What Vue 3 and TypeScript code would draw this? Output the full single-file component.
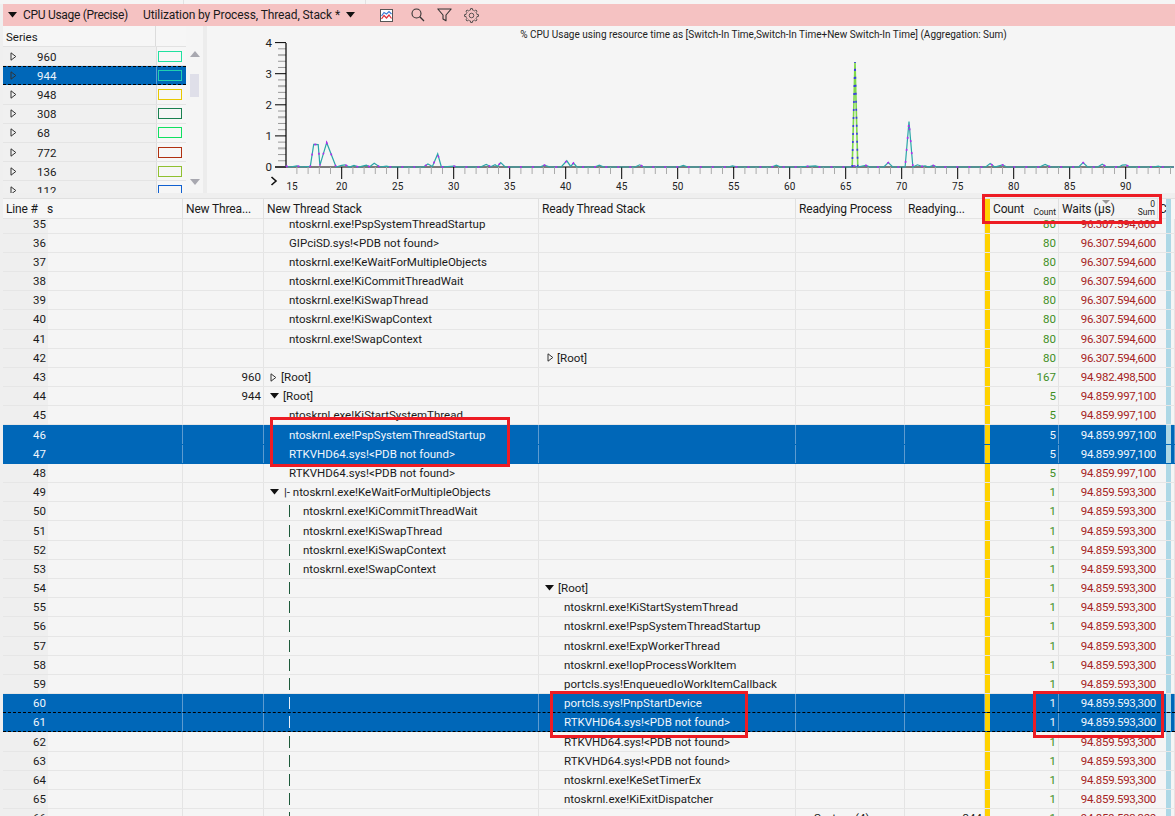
<script setup lang="ts">
type Row = {
  n: number
  id?: string
  kind?: 'plain' | 'root' | 'rootOpen' | 'branch' | 'bar'
  stack?: string
  ready?: string
  readyKind?: 'closed' | 'open' | 'plain'
  proc?: string
  readying?: string
  count: string
  waits: string
  sel?: boolean
  dash?: boolean
}

const W1 = '96.307.594,600'
const W2 = '94.859.997,100'
const W3 = '94.859.593,300'
const K = 'ntoskrnl.exe!'
const RTK = 'RTKVHD64.sys!<PDB not found>'

const rows: Row[] = [
  { n: 35, kind: 'plain', stack: K + 'PspSystemThreadStartup', count: '80', waits: W1 },
  { n: 36, kind: 'plain', stack: 'GIPciSD.sys!<PDB not found>', count: '80', waits: W1 },
  { n: 37, kind: 'plain', stack: K + 'KeWaitForMultipleObjects', count: '80', waits: W1 },
  { n: 38, kind: 'plain', stack: K + 'KiCommitThreadWait', count: '80', waits: W1 },
  { n: 39, kind: 'plain', stack: K + 'KiSwapThread', count: '80', waits: W1 },
  { n: 40, kind: 'plain', stack: K + 'KiSwapContext', count: '80', waits: W1 },
  { n: 41, kind: 'plain', stack: K + 'SwapContext', count: '80', waits: W1 },
  { n: 42, ready: '[Root]', readyKind: 'closed', count: '80', waits: W1 },
  { n: 43, id: '960', kind: 'root', stack: '[Root]', count: '167', waits: '94.982.498,500' },
  { n: 44, id: '944', kind: 'rootOpen', stack: '[Root]', count: '5', waits: W2 },
  { n: 45, kind: 'plain', stack: K + 'KiStartSystemThread', count: '5', waits: W2 },
  { n: 46, kind: 'plain', stack: K + 'PspSystemThreadStartup', count: '5', waits: W2, sel: true },
  { n: 47, kind: 'plain', stack: RTK, count: '5', waits: W2, sel: true },
  { n: 48, kind: 'plain', stack: RTK, count: '5', waits: W2 },
  { n: 49, kind: 'branch', stack: '|- ' + K + 'KeWaitForMultipleObjects', count: '1', waits: W3 },
  { n: 50, kind: 'bar', stack: K + 'KiCommitThreadWait', count: '1', waits: W3 },
  { n: 51, kind: 'bar', stack: K + 'KiSwapThread', count: '1', waits: W3 },
  { n: 52, kind: 'bar', stack: K + 'KiSwapContext', count: '1', waits: W3 },
  { n: 53, kind: 'bar', stack: K + 'SwapContext', count: '1', waits: W3 },
  { n: 54, kind: 'bar', ready: '[Root]', readyKind: 'open', count: '1', waits: W3 },
  { n: 55, kind: 'bar', ready: K + 'KiStartSystemThread', readyKind: 'plain', count: '1', waits: W3 },
  { n: 56, kind: 'bar', ready: K + 'PspSystemThreadStartup', readyKind: 'plain', count: '1', waits: W3 },
  { n: 57, kind: 'bar', ready: K + 'ExpWorkerThread', readyKind: 'plain', count: '1', waits: W3 },
  { n: 58, kind: 'bar', ready: K + 'IopProcessWorkItem', readyKind: 'plain', count: '1', waits: W3 },
  { n: 59, kind: 'bar', ready: 'portcls.sys!EnqueuedIoWorkItemCallback', readyKind: 'plain', count: '1', waits: W3 },
  { n: 60, kind: 'bar', ready: 'portcls.sys!PnpStartDevice', readyKind: 'plain', count: '1', waits: W3, sel: true, dash: true },
  { n: 61, kind: 'bar', ready: RTK, readyKind: 'plain', count: '1', waits: W3, sel: true, dash: true },
  { n: 62, kind: 'bar', ready: RTK, readyKind: 'plain', count: '1', waits: W3 },
  { n: 63, kind: 'bar', ready: RTK, readyKind: 'plain', count: '1', waits: W3 },
  { n: 64, kind: 'bar', ready: K + 'KeSetTimerEx', readyKind: 'plain', count: '1', waits: W3 },
  { n: 65, kind: 'bar', ready: K + 'KiExitDispatcher', readyKind: 'plain', count: '1', waits: W3 },
  { n: 66, kind: 'bar', proc: 'System (4)', readying: '344', count: '1', waits: W3 },
]

const series = [
  { id: '960', color: '#20e0a0' },
  { id: '944', color: '#20d0b0', sel: true },
  { id: '948', color: '#e8c800' },
  { id: '308', color: '#1a8050' },
  { id: '68', color: '#10e060' },
  { id: '772', color: '#b03010' },
  { id: '136', color: '#90c030' },
  { id: '112', color: '#1060d0' },
]

const X = (t: number) => 286.7 + (t - 15) * 11.2
const Y = (v: number) => 167 - 31.1 * v

const pts: [number, number][] = [
  [15, 0.03], [15.4, 0], [16, 0.04], [16.4, 0], [17.2, 0.02], [17.5, 0.73], [17.9, 0.72], [18.05, 0.05],
  [18.66, 0.78], [19.5, 0], [20, 0.05], [20.3, 0.07], [20.7, 0], [21.1, 0.05], [21.5, 0], [22.2, 0.06], [22.5, 0.01],
  [22.9, 0.12], [23.4, 0], [24, 0.03], [24.4, 0], [27.3, 0], [27.7, 0.1], [28.1, 0.02], [28.57, 0.42], [28.9, 0],
  [30, 0.03], [30.4, 0], [32.4, 0], [32.9, 0.08], [33.3, 0.01], [33.7, 0.07], [33.9, 0.02], [34.2, 0.14], [34.6, 0],
  [37.7, 0], [38.1, 0.06], [38.6, 0], [39.6, 0], [40.1, 0.2], [40.45, 0.02], [40.7, 0.13], [41, 0], [42.6, 0],
  [43, 0.06], [43.4, 0], [46.2, 0], [46.6, 0.07], [47, 0], [50.1, 0], [50.5, 0.05], [50.9, 0], [54.5, 0], [54.9, 0.04],
  [55.3, 0], [58.4, 0], [58.8, 0.06], [59.2, 0], [60.7, 0], [62.3, 0.04], [62.7, 0], [65.5, 0], [65.6, 0.05], [66.05, 0], [66.8, 0.05],
  [67.2, 0], [68.4, 0], [68.8, 0.14], [69.2, 0], [70.3, 0], [70.65, 1.46], [71, 0], [71.4, 0.07], [71.8, 0.02], [72.1, 0.04],
  [72.4, 0], [72.8, 0.05], [73.2, 0], [77.5, 0], [77.9, 0.11], [78.3, 0], [78.7, 0.04], [79, 0.07], [79.4, 0], [82.3, 0],
  [82.8, 0.08], [83.3, 0], [85.8, 0], [86.2, 0.14], [86.6, 0], [87.5, 0], [87.9, 0.09], [88.3, 0], [89.4, 0], [89.7, 0.06],
  [90, 0.07], [90.4, 0], [92.5, 0], [92.9, 0.03], [93.2, 0], [94.4, 0],
]
const linePts = pts.map(([t, v]) => `${X(t).toFixed(1)},${Y(v).toFixed(1)}`).join(' ')
const spikePts = [[65.58, 0], [65.83, 3.38], [66.08, 0]]
  .map(([t, v]) => `${X(t).toFixed(1)},${Y(v).toFixed(1)}`)
  .join(' ')

const majorX: number[] = []
for (let t = 20; t <= 90; t += 5) majorX.push(t)
const minorX: number[] = []
for (let t = 15; t <= 94; t++) if (t % 5 !== 0) minorX.push(t)
const minorY: number[] = []
for (let i = 1; i < 20; i++) if (i % 5 !== 0) minorY.push(i / 5)
const thickY = [0.6, 1.6, 2.6, 3.6]

const gearPath = (() => {
  const teeth = 8
  const cx = 8.5
  const cy = 8.5
  let d = ''
  for (let i = 0; i < teeth; i++) {
    const a = (i / teeth) * Math.PI * 2
    const s = (Math.PI * 2) / teeth
    const p = [
      [a - s * 0.5, 6.3],
      [a - s * 0.24, 6.3],
      [a - s * 0.15, 8],
      [a + s * 0.15, 8],
      [a + s * 0.24, 6.3],
    ]
    for (const [ang, r] of p) {
      const x = cx + r * Math.cos(ang)
      const y = cy + r * Math.sin(ang)
      d += `${d ? 'L' : 'M'}${x.toFixed(2)} ${y.toFixed(2)}`
    }
  }
  return d + 'Z'
})()
</script>

<template>
  <div class="page">
    <div class="strip">
      <i class="strip-a"></i>
      <i class="strip-b"></i>
      <i class="strip-c"></i>
    </div>

    <header class="title">
      <svg class="tri" width="9" height="6" viewBox="0 0 9 6"><path d="M0 0H9L4.5 5.5Z" fill="#111" /></svg>
      <span class="t-name">CPU Usage (Precise)</span>
      <span class="t-view">Utilization by Process, Thread, Stack *</span>
      <svg class="tri t-drop" width="9" height="6" viewBox="0 0 9 6"><path d="M0 0H9L4.5 5.5Z" fill="#111" /></svg>
      <svg class="ic ic-chart" width="13" height="13" viewBox="0 0 13 13">
        <rect x="0.5" y="0.5" width="12" height="12" fill="#fff" stroke="#555" />
        <path d="M1.5 7 4 3.5 6.5 5 9 2.5 11.5 5" fill="none" stroke="#3a7bd5" stroke-width="1.2" />
        <path d="M1.5 10 4 6.5 6.5 9 9 6 11.5 9.5" fill="none" stroke="#e0303a" stroke-width="1.2" />
      </svg>
      <svg class="ic ic-search" width="14" height="14" viewBox="0 0 14 14">
        <circle cx="5.5" cy="5.5" r="4.5" fill="none" stroke="#333" stroke-width="1.1" />
        <path d="M8.8 8.8 13 13" stroke="#333" stroke-width="1.3" />
      </svg>
      <svg class="ic ic-filter" width="15" height="14" viewBox="0 0 15 14">
        <path d="M0.8 1H14.2L9 7V12.8L6 11V7Z" fill="none" stroke="#333" stroke-width="1.1" stroke-linejoin="round" />
      </svg>
      <svg class="ic ic-gear" width="15" height="15" viewBox="0 0 17 17">
        <path :d="gearPath" fill="none" stroke="#444" stroke-width="1" stroke-linejoin="round" />
        <circle cx="8.5" cy="8.5" r="2.6" fill="none" stroke="#444" stroke-width="1" />
      </svg>
    </header>

    <section class="top">
      <div class="series">
        <div class="s-head">
          <div class="s-h1">Series</div>
          <div class="s-h2"></div>
        </div>
        <div class="s-list">
          <div v-for="s in series" :key="s.id" class="s-row" :class="{ on: s.sel }">
            <svg class="tg s-tg" width="7" height="9" viewBox="0 0 7 9"><path d="M1 .8V8.2L5.8 4.5Z" fill="none" stroke="#333" /></svg>
            <span class="s-id">{{ s.id }}</span>
            <span class="s-col"><i class="swatch" :style="{ borderColor: s.color }"></i></span>
          </div>
        </div>
      </div>
      <div class="scroll">
        <svg width="10" height="6" viewBox="0 0 10 6"><path d="M0 6 5 0l5 6Z" fill="#a8a8b0" /></svg>
        <div class="thumb"></div>
        <svg class="down" width="10" height="6" viewBox="0 0 10 6"><path d="M0 0 5 6l5-6Z" fill="#a8a8b0" /></svg>
      </div>
      <div class="sep"></div>
      <svg class="chart" width="967" height="167" viewBox="208 26 967 167">
        <text x="764.5" y="38" text-anchor="middle" class="c-title">% CPU Usage using resource time as [Switch-In Time,Switch-In Time+New Switch-In Time] (Aggregation: Sum)</text>
        <line v-for="v in minorY" :key="'my' + v" x1="279" x2="287" :y1="Y(v)" :y2="Y(v)" stroke="#999" stroke-width="1" />
        <line v-for="v in thickY" :key="'thk' + v" x1="279" x2="287" :y1="Y(v)" :y2="Y(v)" stroke="#b5b5b5" stroke-width="2" />
        <line v-for="v in [0, 1, 2, 3, 4]" :key="'ty' + v" x1="276" x2="287" :y1="Y(v)" :y2="Y(v)" stroke="#000" stroke-width="1" />
        <line x1="287" x2="287" y1="43" y2="167" stroke="#000" stroke-width="1.2" />
        <line x1="276" x2="1175" y1="167" y2="167" stroke="#000" stroke-width="1" />
        <line v-for="t in minorX" :key="'mx' + t" :x1="X(t)" :x2="X(t)" y1="167" y2="174" stroke="#aaa" stroke-width="1" />
        <line v-for="t in majorX" :key="'tx' + t" :x1="X(t)" :x2="X(t)" y1="167" y2="179" stroke="#000" stroke-width="1" />
        <text v-for="v in [0, 1, 2, 3, 4]" :key="'ly' + v" x="273" :y="Y(v) + 4" text-anchor="end" class="c-lbl big">{{ v }}</text>
        <text x="293" y="190" text-anchor="middle" class="c-lbl">15</text>
        <text v-for="t in majorX" :key="'lx' + t" :x="X(t)" y="190" text-anchor="middle" class="c-lbl">{{ t }}</text>
        <path d="M272.5 177 277 181 272.5 185" fill="none" stroke="#111" stroke-width="1.6" />
        <polyline :points="linePts" fill="none" stroke="#2aa6a8" stroke-width="1.2" />
        <polyline :points="linePts" fill="none" stroke="#b428f0" stroke-width="1.6" stroke-dasharray="2 10" />
        <polyline :points="spikePts" fill="none" stroke="#7fd84a" stroke-width="1.6" />
        <polyline :points="spikePts" fill="none" stroke="#3a3ae6" stroke-width="1.6" stroke-dasharray="2 6" />
      </svg>
    </section>

    <section class="table">
      <div class="thead cols">
        <div class="th first">Line #</div>
        <div class="th s-clip">s</div>
        <div class="th">New Threa...</div>
        <div class="th">New Thread Stack</div>
        <div class="th">Ready Thread Stack</div>
        <div class="th">Readying Process</div>
        <div class="th">Readying...</div>
        <div class="yellow"></div>
        <div class="th th-m">Count<small class="sub">Count</small></div>
        <div class="th th-m">
          Waits (µs)
          <i class="sort"></i>
          <small class="zero">0</small>
          <small class="sub">Sum</small>
        </div>
        <div class="th clip">C</div>
        <div class="lblue"></div>
        <div class="th end"></div>
      </div>
      <div class="tbody">
        <div v-for="r in rows" :key="r.n" class="tr cols" :class="{ on: r.sel, dash: r.dash }">
          <div class="td num">{{ r.n }}</div>
          <div class="td"></div>
          <div class="td tid">{{ r.id }}</div>
          <div class="td stack">
            <template v-if="r.kind === 'plain'"><span class="pad">{{ r.stack }}</span></template>
            <template v-else-if="r.kind === 'root'">
              <svg class="tg rt" width="7" height="9" viewBox="0 0 7 9"><path d="M1 .8V8.2L5.8 4.5Z" fill="none" stroke="#333" /></svg>
              <span>{{ r.stack }}</span>
            </template>
            <template v-else-if="r.kind === 'rootOpen'">
              <svg class="tg rt" width="9" height="6" viewBox="0 0 9 6"><path d="M0 0H9L4.5 5.5Z" fill="#111" /></svg>
              <span class="rt-t">{{ r.stack }}</span>
            </template>
            <template v-else-if="r.kind === 'branch'">
              <svg class="tg rt" width="9" height="6" viewBox="0 0 9 6"><path d="M0 0H9L4.5 5.5Z" fill="#111" /></svg>
              <span class="br-t">{{ r.stack }}</span>
            </template>
            <template v-else-if="r.kind === 'bar'">
              <i class="vbar"></i>
              <span class="bar-t">{{ r.stack }}</span>
            </template>
          </div>
          <div class="td ready">
            <template v-if="r.readyKind === 'closed'">
              <svg class="tg rd" width="7" height="9" viewBox="0 0 7 9"><path d="M1 .8V8.2L5.8 4.5Z" fill="none" stroke="#333" /></svg>
              <span>{{ r.ready }}</span>
            </template>
            <template v-else-if="r.readyKind === 'open'">
              <svg class="tg rd2" width="9" height="6" viewBox="0 0 9 6"><path d="M0 0H9L4.5 5.5Z" fill="#111" /></svg>
              <span>{{ r.ready }}</span>
            </template>
            <span v-else-if="r.readyKind === 'plain'" class="pad">{{ r.ready }}</span>
          </div>
          <div class="td proc">{{ r.proc }}</div>
          <div class="td tid">{{ r.readying }}</div>
          <div class="yellow"></div>
          <div class="td count">{{ r.count }}</div>
          <div class="td waits">{{ r.waits }}</div>
          <div class="td gapc"></div>
          <div class="lblue"></div>
          <div class="td"></div>
        </div>
      </div>
    </section>

    <i class="mark m1"></i>
    <i class="mark m2"></i>
    <i class="mark m3"></i>
    <i class="mark m4"></i>
  </div>
</template>

<style>
html, body { margin: 0; background: #f5f5f5; }
</style>

<style scoped>
.page {
  position: relative;
  width: 1175px;
  height: 816px;
  overflow: hidden;
  background: #efefef;
  font-family: Roboto, "Noto Sans", sans-serif;
  font-size: 11.5px;
  color: #1a1a1a;
  display: flex;
  flex-direction: column;
}
svg { display: block; flex: none; }

.strip { height: 4px; display: flex; gap: 1px; background: #e2e2e2; flex: none; }
.strip i { display: block; height: 4px; background: #f5f5f5; }
.strip-a { width: 183px; }
.strip-b { width: 181px; }
.strip-c { flex: 1; }

.title {
  height: 22px;
  margin-left: 3px;
  background: #f5c2c2;
  display: flex;
  align-items: center;
  flex: none;
  font-size: 12px;
}
.tri { margin-left: 5px; }
.t-name { margin-left: 6px; width: 120px; white-space: nowrap; letter-spacing: -0.3px; }
.t-view { white-space: nowrap; width: 200px; letter-spacing: -0.1px; }
.t-drop { margin-left: 3px; }
.ic-chart { margin-left: 25px; }
.ic-search { margin-left: 18px; }
.ic-filter { margin-left: 12px; }
.ic-gear { margin-left: 12px; }

.top { height: 167px; margin-left: 3px; display: flex; flex: none; background: #f5f5f5; }
.series { width: 183px; flex: none; display: flex; flex-direction: column; }
.s-head { height: 21px; display: flex; flex: none; border-bottom: 1px solid #e2e2e2; box-sizing: border-box; background: #f6f6f6; }
.s-h1 { width: 153px; padding: 4px 0 0 3px; box-sizing: border-box; border-right: 1px solid #dcdcdc; }
.s-h2 { width: 30px; }
.s-list { height: 146px; overflow: hidden; }
.s-row {
  height: 19.2px;
  box-sizing: border-box;
  display: flex;
  align-items: center;
  background: #f0f0f0;
  border-bottom: 1px solid #e4e4e4;
  position: relative;
}
.s-tg { margin-left: 7px; }
.s-id { margin-left: 20px; width: 119px; padding-top: 1px; }
.s-col {
  align-self: stretch;
  width: 30px;
  background: #f6f6f6;
  border-left: 1px solid #dedede;
  box-sizing: border-box;
  display: flex;
  align-items: center;
  padding-left: 1px;
}
.swatch { display: block; width: 24px; height: 11px; box-sizing: border-box; border: 1px solid; }
.s-row.on { background: #0067b8; color: #eaf2fa; border-bottom: 1px dashed #000; border-top: 1px dashed #000; }
.s-row.on .s-col { background: #0067b8; border-left-color: #5d9bd0; }

.scroll { width: 17px; flex: none; display: flex; flex-direction: column; align-items: center; padding-top: 25px; box-sizing: border-box; background: #f5f5f5; }
.thumb { width: 9px; height: 23px; margin-top: 17px; background: #dfdfe9; }
.down { margin-top: 82px; }
.sep { width: 4px; flex: none; background: #ececec; }
.chart { flex: none; background: #f5f5f5; }
.c-title { font-size: 10px; fill: #222; }
.c-lbl { font-size: 10px; fill: #222; }
.c-lbl.big { font-size: 11.5px; }

.table { margin-top: 5px; flex: 1; min-height: 0; background: #f5f5f5; margin-left: 3px; display: flex; flex-direction: column; }
.cols { display: grid; grid-template-columns: 45px 135px 81px 275px 257px 109px 80px 5px 69px 99px 8px 5px 4px; }
.thead {
  height: 21px;
  flex: none;
  position: relative;
  z-index: 2;
  background: #f5f5f5;
  border-top: 1px solid #e0e0e0;
  box-sizing: border-box;
  font-size: 12px;
}
.th {
  position: relative;
  box-sizing: border-box;
  border-right: 1px solid #e0e0e0;
  border-bottom: 1px solid #e4e4e4;
  padding: 3px 0 0 3px;
  white-space: nowrap;
  overflow: hidden;
  background: #f6f6f6;
  letter-spacing: -0.15px;
}
.th.first { border-right: none; padding-left: 3px; }
.th.s-clip { padding-left: 0; margin-left: -1px; }
.th.clip { border-right: none; padding-left: 1px; }
.th.end { border: none; }
.th-m { padding-left: 3px; background: #f4f4f4; }
.sub { position: absolute; right: 2px; bottom: 0; font-size: 8.5px; line-height: 11px; letter-spacing: 0; }
.zero { position: absolute; right: 2px; top: 0; font-size: 8.5px; line-height: 11px; letter-spacing: 0; }
.sort {
  position: absolute;
  left: 43px;
  top: 1px;
  width: 0;
  height: 0;
  border-left: 4px solid transparent;
  border-right: 4px solid transparent;
  border-top: 4px solid #999;
}
.yellow { background: #ffd200; }
.lblue { background: #add8e6; }

.tbody { margin-top: -4.6px; flex: 1; min-height: 0; overflow: hidden; }
.tr { height: 19.2px; box-sizing: border-box; border-bottom: 1px solid #e6e6e6; }
.td {
  border-right: 1px solid #e4e4e4;
  white-space: nowrap;
  display: flex;
  align-items: center;
  box-sizing: border-box;
  min-width: 0;
  position: relative;
}
.num { background: #efefef; justify-content: flex-end; padding-right: 2px; border-right: none; }
.tid { justify-content: flex-end; padding-right: 2px; }
.stack, .ready { padding-left: 0; }
.pad { margin-left: 25px; }
.rt { margin-left: 6px; margin-right: 4px; }
.rt-t { margin-left: 0; }
.br-t { margin-left: 1px; }
.vbar { display: block; width: 1px; height: 12px; background: #1d5a3a; margin-left: 25px; }
.bar-t { margin-left: 13px; }
.rd { margin-left: 8px; margin-right: 3px; }
.rd2 { margin-left: 6px; margin-right: 4px; }
.proc { padding-left: 18px; }
.count { justify-content: flex-end; padding-right: 2px; color: #3f8f1f; }
.waits { justify-content: flex-end; padding-right: 2px; color: #a52323; border-right: none; letter-spacing: -0.3px; }
.gapc { border-right: none; }

.tr.on { background: #0067b8; color: #f0f6fc; border-bottom-color: #0067b8; }
.tr.on .td { border-right-color: #5d9bd0; }
.tr.on .num { background: #0067b8; }
.tr.on .count, .tr.on .waits { color: #f0f6fc; }
.tr.on .vbar { background: #e6eef8; }
.tr.dash { border-bottom: 1px dashed #000; }

.mark { position: absolute; display: block; box-sizing: border-box; border: 3px solid #ed1c24; pointer-events: none; z-index: 5; }
.m1 { left: 982px; top: 194px; width: 180px; height: 30px; }
.m2 { left: 270px; top: 417px; width: 240px; height: 50px; }
.m3 { left: 550px; top: 691px; width: 198px; height: 47px; }
.m4 { left: 1033px; top: 691px; width: 131px; height: 47px; }
</style>
